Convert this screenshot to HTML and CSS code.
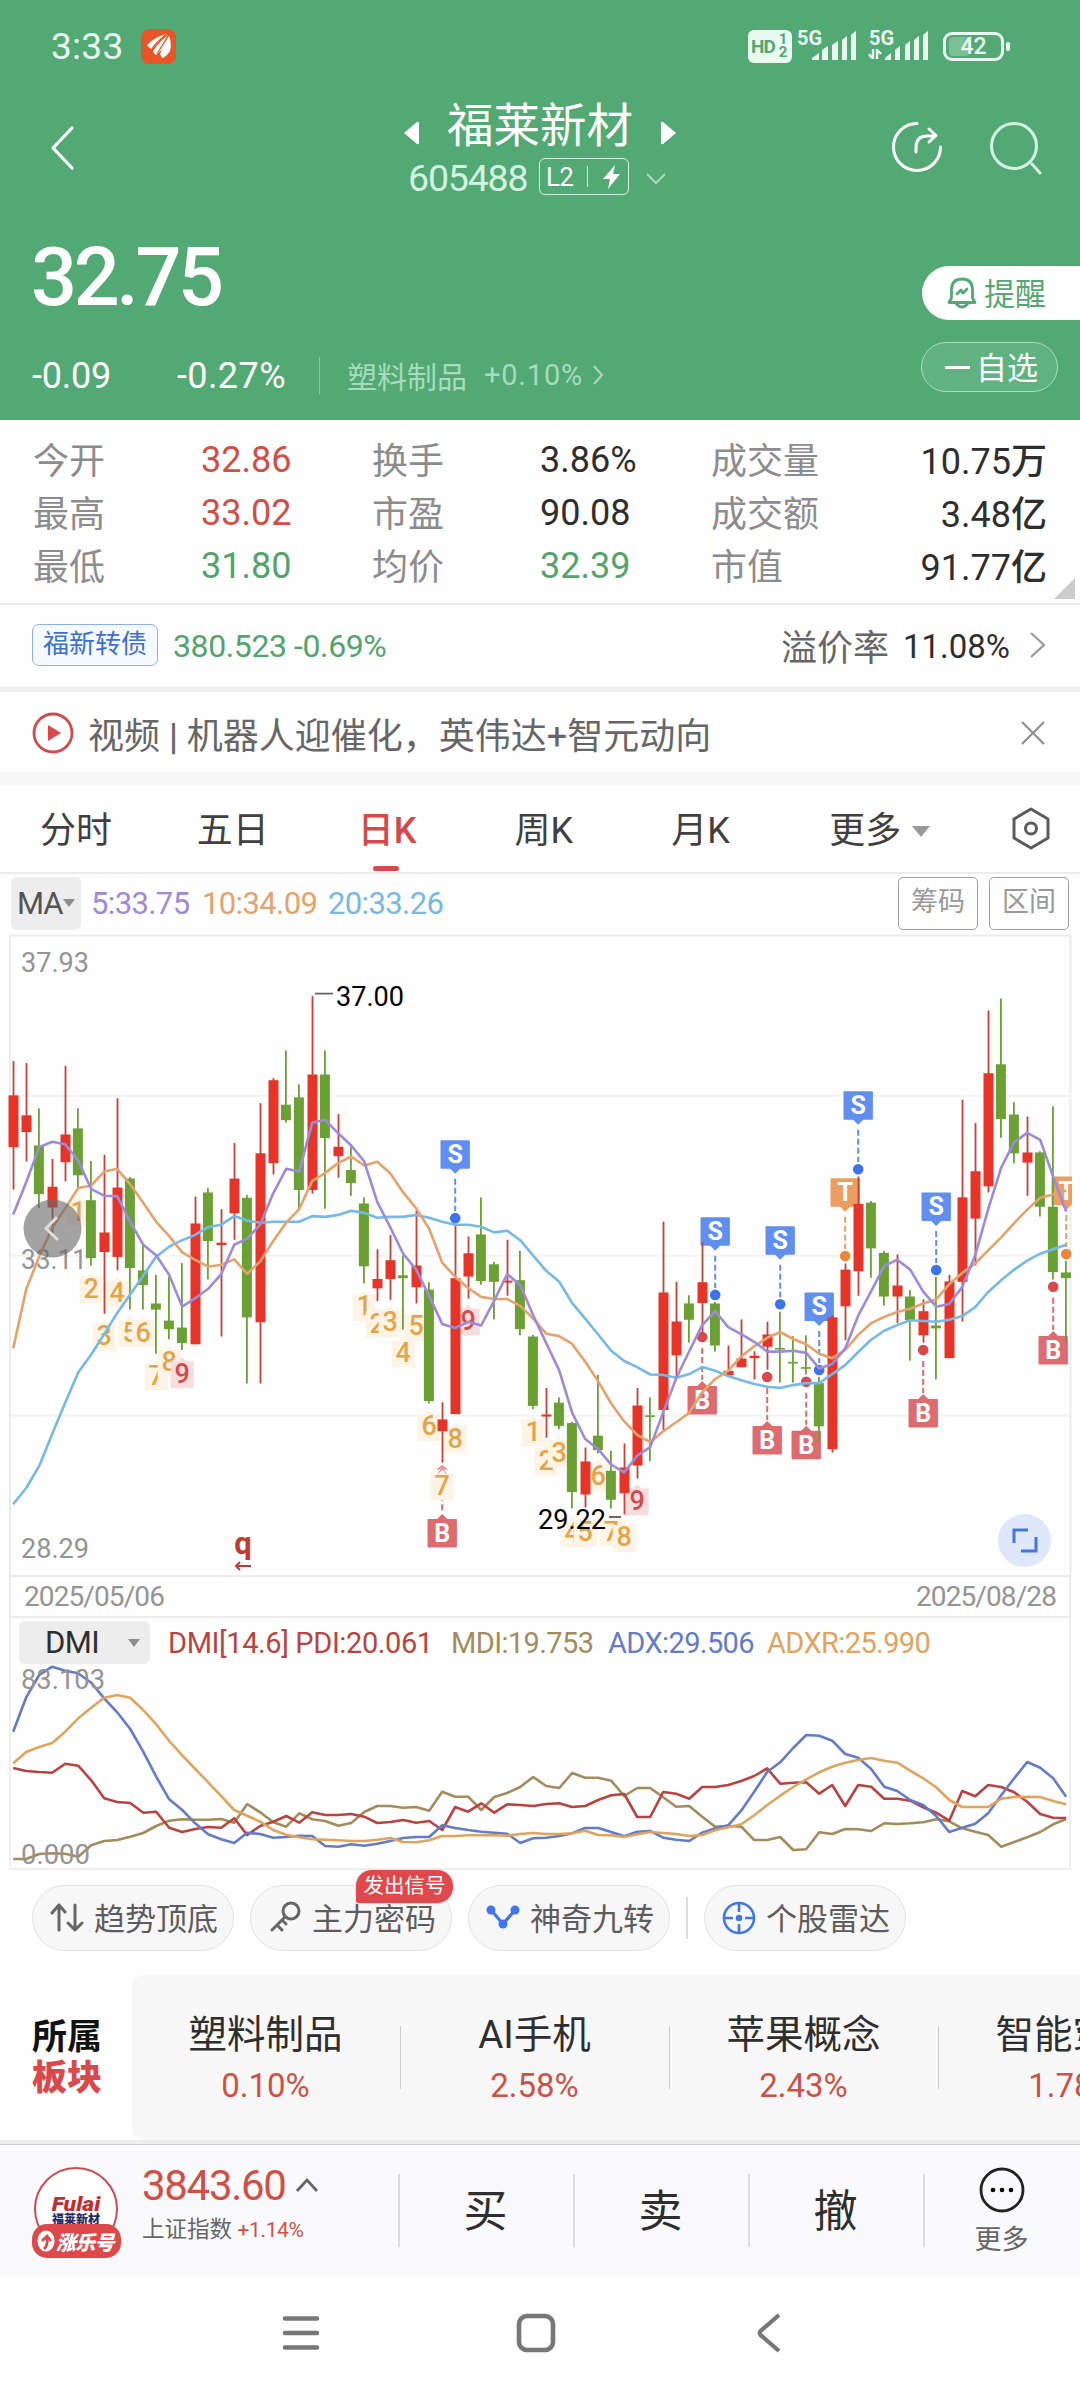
FILE: index.html
```html
<!DOCTYPE html>
<html lang="zh-CN">
<head>
    <meta charset="UTF-8">
    <meta name="viewport" content="width=device-width, initial-scale=1.0">
    <title>福莱新材 605488</title>
    <link rel="stylesheet" href="styles.css">
</head>
<body>
    <header class="header">
        <div class="status-bar">
            <span class="time">3:33</span>
            <svg class="app-logo" width="35" height="35" viewBox="0 0 35 35">
                <rect width="35" height="35" rx="8" fill="#ea5528"/>
                <path d="M6 16Q13 8 26 5Q22 7 19 11Q14 17 11 20Q8 19 6 16Z" fill="#fff"/>
                <path d="M12 22Q19 12 27 6Q24 12 21 20Q18 24 15 26Q13 25 12 22Z" fill="#fff"/>
                <path d="M19 25Q23 14 28 7Q31 15 29 22Q26 27 22 29Q20 28 19 25Z" fill="#fff"/>
                <path d="M11 20Q16 12 25 6M16 25Q22 15 27 7" fill="none" stroke="#ea5528" stroke-width="1.3"/>
            </svg>
            <div class="status-icons">
                <div class="hd-badge">HD<span class="hd-sims"><i>1</i><i>2</i></span></div>
                <svg class="signal" width="60" height="34" viewBox="0 0 60 34">
                    <text x="0" y="16" class="signal-text">5G</text>
                    <path d="M15 31v-2l7-5v7zM25 31v-10l6-4v14zM35 31v-15l6-4v19zM45 31v-20l5-4v24zM54 31v-25l5-4v29z" fill="#e9f9f0"/>
                </svg>
                <svg class="signal" width="62" height="34" viewBox="0 0 62 34">
                    <text x="1" y="16" class="signal-text">5G</text>
                    <path d="M5 20v10M1 25l3 4M9 20v10M9 21l4 4" stroke="#e9f9f0" stroke-width="2.4" fill="none"/>
                    <path d="M17 31v-2l6-5v7zM27 31v-10l5-4v14zM37 31v-15l5-4v19zM46 31v-20l5-4v24zM55 31v-25l5-4v29z" fill="#e9f9f0"/>
                </svg>
                <div class="battery"><span class="battery-level"></span>42</div>
                <span class="battery-tip"></span>
            </div>
        </div>

        <div class="title-bar">
            <svg class="back" width="26" height="46" viewBox="0 0 26 46"><path d="M23 3L4 23L23 43" fill="none" stroke="#fff" stroke-width="3.2" stroke-linecap="round" stroke-linejoin="round"/></svg>
            <div class="title">
                <div class="title-name">
                    <svg width="16" height="24" viewBox="0 0 16 24"><path d="M1 12L14 1Q16 0 16 2V22Q16 24 14 23Z" fill="#fff"/></svg>
                    <h1>福莱新材</h1>
                    <svg width="16" height="24" viewBox="0 0 16 24"><path d="M15 12L2 1Q0 0 0 2V22Q0 24 2 23Z" fill="#fff"/></svg>
                </div>
                <div class="title-code">
                    <span class="code num">605488</span>
                    <span class="level num">L2<i></i><svg width="20" height="26" viewBox="0 0 20 26"><path d="M13 1L1 15H8L6 25L18 10H11Z" fill="#fff"/></svg></span>
                    <svg class="code-arrow" width="22" height="13" viewBox="0 0 22 13"><path d="M2 2L11 11L20 2" fill="none" stroke="#a5dcbb" stroke-width="2"/></svg>
                </div>
            </div>
            <div class="title-actions">
                <svg width="52" height="52" viewBox="0 0 52 52" fill="none" stroke="#fff" stroke-width="3" stroke-linecap="round" stroke-linejoin="round">
                    <path d="M26 2.500A23.500 23.500 0 1 0 49.500 26"/>
                    <path d="M25 31V25Q26 15 36 15H44M38 8L45 14.500L38 21"/>
                </svg>
                <svg width="54" height="54" viewBox="0 0 54 54" fill="none" stroke="#d2f4e1" stroke-width="3" stroke-linecap="round">
                    <circle cx="25" cy="25" r="22.500"/>
                    <path d="M43 43L51 52"/>
                </svg>
            </div>
        </div>

        <div class="price-row">
            <div class="price num">32.75</div>
            <a class="remind" href="#">
                <svg width="30" height="32" viewBox="0 0 30 32" fill="none" stroke="#53a974" stroke-width="2.800" stroke-linejoin="round" stroke-linecap="round">
                    <path d="M4.500 21V12Q5 2 15 2Q25 2 25.500 12V21L28 25.500H2Z"/>
                    <path d="M9.500 27Q15 33 20.500 27M10 17L14 13L16 16L20 12"/>
                </svg>
                <span class="cjk">提醒</span>
            </a>
        </div>

        <div class="change-row">
            <span class="change num">-0.09</span>
            <span class="change-pct num">-0.27%</span>
            <a class="industry" href="#">塑料制品 <span class="num">+0.10%</span>
                <svg width="14" height="22" viewBox="0 0 14 22"><path d="M3 2L11 11L3 20" fill="none" stroke="#a5dcbb" stroke-width="2"/></svg>
            </a>
            <a class="watch" href="#"><i></i><span class="cjk">自选</span></a>
        </div>
    </header>

    <section class="quotes">
        <span class="label">今开</span><span class="value num red">32.86</span>
        <span class="label">换手</span><span class="value num">3.86%</span>
        <span class="label">成交量</span><span class="value num right">10.75万</span>
        <span class="label">最高</span><span class="value num red">33.02</span>
        <span class="label">市盈</span><span class="value num">90.08</span>
        <span class="label">成交额</span><span class="value num right">3.48亿</span>
        <span class="label">最低</span><span class="value num green">31.80</span>
        <span class="label">均价</span><span class="value num green">32.39</span>
        <span class="label">市值</span><span class="value num right">91.77亿</span>
    </section>

    <section class="bond">
        <span class="bond-tag">福新转债</span>
        <span class="bond-value num green">380.523 -0.69%</span>
        <span class="premium">溢价率</span>
        <span class="premium-value num">11.08%</span>
        <svg width="18" height="28" viewBox="0 0 18 28"><path d="M2 2L15 14L2 26" fill="none" stroke="#999" stroke-width="2.200"/></svg>
    </section>

    <section class="news">
        <svg width="42" height="42" viewBox="0 0 42 42"><circle cx="21" cy="21" r="19" fill="none" stroke="#d04c4e" stroke-width="2.800"/><path d="M16 13L29 21L16 29Z" fill="#d9484b"/></svg>
        <span class="news-text">视频 <b>|</b> 机器人迎催化，英伟达+智元动向</span>
        <svg class="close" width="26" height="26" viewBox="0 0 26 26"><path d="M2 2L24 24M24 2L2 24" stroke="#8c8c8c" stroke-width="2"/></svg>
    </section>

    <nav class="tabs">
        <a href="#">分时</a>
        <a href="#">五日</a>
        <a href="#" class="active">日K</a>
        <a href="#">周K</a>
        <a href="#">月K</a>
        <a href="#">更多<i class="caret"></i></a>
        <svg width="40" height="44" viewBox="0 0 40 44" fill="none" stroke="#5c5c5c" stroke-width="3" stroke-linejoin="round">
            <path d="M20 2L37 12V31L20 41L3 31V12Z"/>
            <circle cx="20" cy="21.500" r="5.500"/>
        </svg>
    </nav>

    <div class="ma-bar num">
        <span class="ma-select">MA<i class="caret"></i></span>
        <span class="ma5">5:33.75</span>
        <span class="ma10">10:34.09</span>
        <span class="ma20">20:33.26</span>
        <span class="ma-button first">筹码</span>
        <span class="ma-button">区间</span>
    </div>

    <svg id="kline" class="kline" width="1080" height="645" viewBox="0 0 1080 645"></svg>

    <div class="dates num"><span>2025/05/06</span><span>2025/08/28</span></div>

    <div class="dmi">
        <div class="dmi-bar num">
            <span class="dmi-select">DMI<i class="caret"></i></span>
            <span class="pdi">DMI[14.6] PDI:20.061</span>
            <span class="mdi">MDI:19.753</span>
            <span class="adx">ADX:29.506</span>
            <span class="adxr">ADXR:25.990</span>
        </div>
        <svg id="dmi" width="1060" height="203" viewBox="10 1665 1060 203"></svg>
    </div>

    <section class="tools">
        <a class="tool" href="#">
            <svg width="34" height="34" viewBox="0 0 34 34" fill="none" stroke="#666" stroke-width="3" stroke-linecap="round" stroke-linejoin="round"><path d="M9 29V4M2 12L9 4L15 11M25 4V29M18 22L25 29L32 22"/></svg>
            <span class="cjk">趋势顶底</span>
        </a>
        <a class="tool" href="#">
            <svg width="34" height="34" viewBox="0 0 34 34" fill="none" stroke="#666" stroke-width="3" stroke-linecap="round"><circle cx="23" cy="10" r="8"/><path d="M17 16L4 29M9 24L14 29M14 19L18 23"/></svg>
            <span class="cjk">主力密码</span>
            <span class="tool-tag">发出信号</span>
        </a>
        <a class="tool" href="#">
            <svg width="34" height="34" viewBox="0 0 34 34"><path d="M5 9L17 23L29 9" fill="none" stroke="#4276e8" stroke-width="3.200"/><circle cx="5" cy="9" r="4.500" fill="#4276e8"/><circle cx="29" cy="9" r="4.500" fill="#4276e8"/><circle cx="17" cy="23" r="4.500" fill="#4276e8"/></svg>
            <span class="cjk">神奇九转</span>
        </a>
        <i class="tools-line"></i>
        <a class="tool" href="#">
            <svg width="34" height="34" viewBox="0 0 34 34" fill="none" stroke="#4276e8" stroke-width="2.600"><circle cx="17" cy="17" r="15"/><path d="M17 2V11M17 23V32M2 17H11M23 17H32"/><circle cx="17" cy="17" r="2" fill="#4276e8"/></svg>
            <span class="cjk">个股雷达</span>
        </a>
    </section>

    <section class="sectors">
        <div class="sectors-title">所属<b>板块</b></div>
        <div class="sectors-list">
            <div class="sector">塑料制品<span class="num red">0.10%</span></div>
            <div class="sector">AI手机<span class="num red">2.58%</span></div>
            <div class="sector">苹果概念<span class="num red">2.43%</span></div>
            <div class="sector">智能穿戴<span class="num red">1.78%</span></div>
        </div>
    </section>

    <footer class="trade-bar">
        <div class="company">
            <div class="company-logo"><em>Fulai</em><span>福莱新材</span></div>
            <div class="company-tag">
                <svg width="18" height="22" viewBox="0 0 18 22"><ellipse cx="9" cy="11" rx="8.500" ry="10.500" fill="#fff"/><path d="M7 19Q11 16 10 8M5 11L10 6L14 11" fill="none" stroke="#dd484b" stroke-width="2.800"/></svg>
                涨乐号
            </div>
        </div>
        <div class="index">
            <div class="index-value num red">3843.60<svg width="24" height="16" viewBox="0 0 24 16"><path d="M2 14L12 3L22 14" fill="none" stroke="#666" stroke-width="2.800"/></svg></div>
            <div class="index-name">上证指数 <span class="num red">+1.14%</span></div>
        </div>
        <a class="trade" href="#">买</a>
        <a class="trade" href="#">卖</a>
        <a class="trade" href="#">撤</a>
        <a class="more" href="#">
            <svg width="46" height="46" viewBox="0 0 46 46"><circle cx="23" cy="23" r="21" fill="none" stroke="#222" stroke-width="2.800"/><circle cx="14" cy="23" r="2.300"/><circle cx="23" cy="23" r="2.300"/><circle cx="32" cy="23" r="2.300"/></svg>
            更多
        </a>
    </footer>

    <nav class="system-nav">
        <svg width="38" height="38" viewBox="0 0 38 38" stroke="#777" stroke-width="4.600" stroke-linecap="round"><path d="M3 4.500H35M3 19H35M3 33.500H35"/></svg>
        <svg class="home" width="40" height="40" viewBox="0 0 40 40"><rect x="3" y="3" width="34" height="34" rx="8" fill="none" stroke="#777" stroke-width="4.600"/></svg>
        <svg width="26" height="42" viewBox="0 0 26 42"><path d="M23 3L4.500 19Q3 21 4.500 23L23 39" fill="none" stroke="#777" stroke-width="4.200"/></svg>
    </nav>

    <script src="script.js"></script>
</body>
</html>
```
FILE: styles.css
```css
* {
    box-sizing: border-box;
}
body {
    margin: 0;
    width: 1080px;
    background: #fefefe;
    color: #2e2e2e;
    font-family: Roboto, 'Noto Sans CJK SC', sans-serif;
    overflow-x: hidden;
}
a {
    color: inherit;
    text-decoration: none;
}
i {
    font-style: normal;
}
svg {
    display: block;
    flex-shrink: 0;
}
.num {
    font-family: Roboto, 'Noto Sans CJK SC', sans-serif;
    font-weight: 450;
    letter-spacing: -0.02em;
}
.cjk {
    padding-bottom: 3px;
}
.red {
    color: #cf5046;
}
.green {
    color: #53a36c;
}
.caret {
    display: inline-block;
    border: 9px solid transparent;
    border-top: 11px solid #999;
    border-bottom: 0;
}

/* header */
.header {
    height: 420px;
    background: #53a974;
    color: #fff;
}
.status-bar {
    height: 92px;
    display: flex;
    align-items: center;
    padding: 0 70px 0 51px;
    color: #e9f9f0;
}
.time {
    width: 90px;
    font-size: 37px;
    font-weight: 450;
    letter-spacing: 0.3px;
}
.app-logo {
    margin-top: 1px;
}
.status-icons {
    margin-left: auto;
    display: flex;
    align-items: center;
    color: #e9f9f0;
}
.hd-badge {
    width: 44px;
    height: 33px;
    display: flex;
    align-items: center;
    padding-left: 3px;
    border-radius: 6px;
    background: #e9f9f0;
    color: #53a974;
    font-size: 19px;
    font-weight: 700;
    letter-spacing: -1px;
}
.hd-sims {
    margin-left: 4px;
    font-size: 15px;
    line-height: 13px;
}
.hd-sims i {
    display: block;
}
.signal {
    margin-left: 5px;
    overflow: visible;
}
.signal + .signal {
    margin-left: 11px;
}
.signal-text {
    font-size: 20px;
    font-weight: 700;
    fill: #e9f9f0;
}
.battery {
    position: relative;
    width: 61px;
    height: 29px;
    margin-left: 13px;
    border: 3px solid #e9f9f0;
    border-radius: 9px;
    font-size: 23px;
    font-weight: 500;
    line-height: 24px;
    text-align: center;
    isolation: isolate;
}
.battery-level {
    position: absolute;
    left: 3px;
    top: 2px;
    width: 20px;
    height: 19px;
    border-radius: 4px;
    background: #86c59d;
    z-index: -1;
    opacity: 0.8;
}
.battery-tip {
    width: 4px;
    height: 9px;
    margin-left: 2px;
    border-radius: 2px;
    background: #e9f9f0;
}
.title-bar {
    height: 118px;
    display: grid;
    grid-template-columns: 1fr 320px 1fr;
    align-items: start;
}
.back {
    margin: 33px 0 0 49px;
}
.title-name {
    display: flex;
    align-items: center;
    justify-content: center;
    height: 66px;
}
.title-name svg {
    margin-top: 15px;
}
.title h1 {
    margin: 2px 28px 0;
    font-size: 46.5px;
    font-weight: 400;
    line-height: 62px;
}
.title-code {
    display: flex;
    align-items: center;
    height: 40px;
    padding-left: 28px;
}
.code {
    color: #d2f4e1;
    font-size: 37.500px;
    width: 131px;
    letter-spacing: -1.200px;
}
.level {
    display: flex;
    align-items: center;
    width: 90px;
    height: 37px;
    margin-top: -3px;
    padding-left: 6px;
    border: 1.500px solid #d2f4e1;
    border-radius: 6px;
    font-size: 26px;
    letter-spacing: -0.8px;
}
.level i {
    width: 1px;
    height: 21px;
    margin: 0 14px 0 14px;
    background: #d2f4e1;
}
.code-arrow {
    margin-left: 16px;
}
.title-actions {
    display: flex;
    justify-content: flex-end;
    gap: 46px;
    padding: 29px 37px 0 0;
}
.price-row {
    height: 138px;
    display: flex;
    justify-content: space-between;
    padding-left: 31px;
}
.price {
    padding-top: 20px;
    font-size: 81px;
    line-height: 96px;
    font-weight: 500;
    letter-spacing: -3.400px;
}
.remind {
    width: 158px;
    height: 54px;
    margin-top: 56px;
    padding-left: 25px;
    display: flex;
    align-items: center;
    gap: 7px;
    border-radius: 27px 0 0 27px;
    background: #fff;
    color: #53a974;
    font-size: 31px;
}
.change-row {
    height: 54px;
    display: flex;
    align-items: center;
    padding: 0 22px 0 32px;
}
.change,
.change-pct {
    margin-top: 1px;
    font-size: 36px;
    letter-spacing: -0.2px;
}
.change {
    width: 145px;
}
.change-pct {
    width: 142px;
    letter-spacing: 0.4px;
}
.industry {
    display: flex;
    align-items: center;
    height: 37px;
    padding-left: 27px;
    border-left: 1.500px solid #84c59c;
    color: #a5dcbb;
    font-size: 30px;
}
.industry .num {
    margin-left: 17px;
    font-size: 29px;
    letter-spacing: 0.8px;
}
.industry svg {
    margin-left: 8px;
}
.watch {
    width: 137px;
    height: 50px;
    margin: -16px 0 0 auto;
    padding-left: 23px;
    display: flex;
    align-items: center;
    gap: 6px;
    border: 1px solid #a8dfbd;
    border-radius: 25px;
    background: #61b281;
    font-size: 31px;
}
.watch i {
    width: 25px;
    height: 3px;
    background: #fff;
}

/* quotes */
.quotes {
    position: relative;
    height: 185px;
    padding: 13px 33px 0;
    display: grid;
    grid-template-columns: 168px 171px 168px 171px 120px 216px;
    grid-template-rows: repeat(3, 53px);
    align-items: center;
    border-bottom: 2px solid #ececec;
    font-size: 36px;
}
.quotes::after {
    content: "";
    position: absolute;
    right: 5px;
    bottom: 4px;
    border-left: 21px solid transparent;
    border-bottom: 21px solid #ccc;
}
.label {
    padding-bottom: 3px;
    color: #8c8c8c;
}
.value {
    letter-spacing: 0;
}
.value.right {
    padding-bottom: 3px;
}
.right {
    text-align: right;
}

.bond {
    height: 87px;
    display: flex;
    align-items: center;
    padding: 0 33px 2px 32px;
    border-bottom: 5px solid #eee;
}
.bond-tag {
    width: 126px;
    height: 42px;
    border: 1.500px solid #8fb0e0;
    border-radius: 7px;
    background: #f5faff;
    color: #3c6fd1;
    font-size: 26px;
    line-height: 38px;
    text-align: center;
}
.bond-value {
    margin: 2px 0 0 15px;
    font-size: 32px;
    letter-spacing: -0.4px;
}
.premium {
    margin-left: auto;
    color: #666;
    font-size: 36px;
}
.premium-value {
    margin: 2px 19px 0 14px;
    font-size: 33px;
    letter-spacing: 0;
}
.news {
    height: 93px;
    display: flex;
    align-items: center;
    padding: 2px 34px 0 32px;
    border-bottom: 13px solid #f7f7f7;
}
.news-text {
    margin-left: 14px;
    padding-bottom: 1px;
    color: #666;
    font-size: 36px;
}
.news-text b {
    font-weight: 500;
}
.close {
    margin-left: auto;
}

/* tabs */
.tabs {
    position: relative;
    height: 89px;
    display: flex;
    align-items: center;
    padding: 0 29px 4px 40px;
    border-bottom: 2px solid #ececec;
    color: #404040;
    font-size: 36px;
}
.tabs a {
    width: 157px;
}
.tabs a:nth-child(2) {
    width: 161px;
}
.tabs a:nth-child(3) {
    width: 157px;
}
.tabs a:nth-child(5) {
    width: 158px;
}
.tabs a:nth-child(6) {
    width: 182px;
}
.tabs > svg {
    margin-top: 5px;
}
.tabs .active {
    position: relative;
    color: #d24b4c;
    font-weight: 500;
}
.tabs .active::after {
    content: "";
    position: absolute;
    left: 15px;
    bottom: -18px;
    width: 26px;
    height: 5px;
    border-radius: 3px;
    background: #d9484b;
}
.tabs .caret {
    margin: 0 0 6px 11px;
}
.ma-bar {
    height: 56px;
    display: flex;
    align-items: center;
    padding: 2px 11px 0;
    font-size: 31px;
}
.ma-select {
    width: 70px;
    height: 53px;
    padding-left: 6px;
    display: flex;
    align-items: center;
    border-radius: 6px;
    background: #ededed;
    color: #555;
    letter-spacing: -1px;
}
.ma-select .caret,
.dmi-select .caret {
    border-width: 8px 6.500px 0;
    border-top-color: #8c8c8c;
}
.ma5 {
    width: 111px;
    margin-left: 10px;
    color: #9d8bd8;
}
.ma10 {
    width: 126px;
    color: #e3a36d;
}
.ma20 {
    color: #76b9e5;
}
.ma-button {
    width: 80px;
    height: 53px;
    margin-left: 11px;
    border: 1.500px solid #a0a0a0;
    border-radius: 5px;
    color: #999;
    font-size: 27px;
    font-weight: 400;
    line-height: 49px;
    letter-spacing: 0;
    text-align: center;
}
.ma-button.first {
    margin-left: auto;
}

/* charts */
.kline {
    font-family: Roboto, sans-serif;
}
.dates {
    height: 43px;
    margin: 0 9px;
    padding: 0 13px;
    display: flex;
    justify-content: space-between;
    align-items: center;
    border: 2px solid #ececec;
    color: #949494;
    font-size: 28px;
    letter-spacing: -0.9px;
}
.dmi {
    height: 252px;
    margin: 0 9px;
    border: 2px solid #efefef;
    border-top: 0;
}
.dmi > svg {
    margin-left: -1px;
    overflow: visible;
}
.dmi-bar {
    height: 47px;
    display: flex;
    align-items: center;
    padding: 2px 0 0 8px;
    font-size: 29px;
    letter-spacing: -0.6px;
}
.dmi-select {
    width: 131px;
    height: 43px;
    margin-right: 18px;
    padding: 0 10px 0 26px;
    display: flex;
    align-items: center;
    justify-content: space-between;
    border-radius: 6px;
    background: #ededed;
    font-size: 31px;
}
.pdi {
    width: 283px;
    color: #b94340;
    letter-spacing: -0.4px;
    white-space: nowrap;
}
.mdi {
    width: 157px;
    color: #a38c5c;
}
.adx {
    width: 159px;
    color: #647bc6;
}
.adxr {
    color: #dfa45e;
}

/* tools */
.tools {
    height: 105px;
    padding: 15px 32px 0;
    display: flex;
    align-items: flex-start;
    gap: 16px;
}
.tool {
    position: relative;
    width: 202px;
    height: 66px;
    display: flex;
    align-items: center;
    gap: 10px;
    padding-left: 17px;
    border: 1.500px solid #e3e3e3;
    border-radius: 33px;
    background: #f7f7f7;
    color: #5c5c5c;
    font-size: 31px;
    white-space: nowrap;
}
.tool-tag {
    position: absolute;
    left: 104px;
    top: -17px;
    width: 99px;
    height: 35px;
    border: 1px solid #f8dcdc;
    border-radius: 17px 17px 17px 3px;
    background: #e0494c;
    color: #fff;
    font-size: 20.500px;
    line-height: 32px;
    text-align: center;
}
.tools-line {
    width: 2px;
    height: 42px;
    margin-top: 12px;
    background: #ddd;
}
.sectors {
    height: 165px;
    display: flex;
    overflow: hidden;
}
.sectors-title {
    width: 132px;
    padding: 42px 0 0 32px;
    color: #111;
    font-size: 35px;
    font-weight: 700;
    line-height: 41px;
}
.sectors-title b {
    display: block;
    color: #d9484b;
}
.sectors-list {
    width: 948px;
    display: flex;
    border-radius: 12px 0 0 12px;
    background: #f7f7f7;
    overflow: hidden;
}
.sector {
    position: relative;
    flex: 0 0 269px;
    padding: 32px 2px 0 0;
    font-size: 38.500px;
    line-height: 56px;
    text-align: center;
    white-space: nowrap;
}
.sector span {
    display: block;
    margin-top: -1px;
    font-size: 33px;
    line-height: 48px;
    letter-spacing: 0;
}
.sector::after {
    content: "";
    position: absolute;
    right: 0;
    top: 51px;
    width: 1px;
    height: 63px;
    background: #ccc;
}

/* bottom bars */
.trade-bar {
    height: 136px;
    display: flex;
    border-top: 4px solid #ededed;
    background: #fafafc;
    box-shadow: inset 0 1px #cfcfcf;
}
.company {
    width: 142px;
    padding: 23px 0 0 32px;
}
.company-logo {
    width: 84px;
    height: 84px;
    margin-left: 2px;
    padding-top: 26px;
    border: 2px solid #cb4c50;
    border-radius: 50%;
    background: #fff;
    text-align: center;
}
.company-logo em {
    display: block;
    color: #bd2f33;
    font-size: 20px;
    font-weight: 900;
    line-height: 18px;
    transform: scaleX(1.15);
}
.company-logo span {
    display: block;
    color: #252b68;
    font-size: 12px;
    font-weight: 900;
    line-height: 14px;
}
.company-tag {
    position: relative;
    width: 89px;
    height: 34px;
    margin-top: -27px;
    display: flex;
    align-items: center;
    gap: 1px;
    padding-left: 5px;
    border-radius: 15px;
    background: #dd484b;
    color: #fff;
    font-size: 20px;
    font-weight: 900;
    font-style: italic;
    white-space: nowrap;
    letter-spacing: -0.8px;
}
.index {
    width: 256px;
    padding-top: 14px;
}
.index-value {
    display: flex;
    align-items: center;
    gap: 9px;
    height: 54px;
    font-size: 42px;
    letter-spacing: -1.300px;
}
.index-name {
    color: #666;
    font-size: 22.500px;
    line-height: 34px;
}
.index-name .num {
    font-size: 21px;
    letter-spacing: -0.4px;
}
.trade,
.more {
    position: relative;
    width: 175px;
    padding-top: 36px;
    font-size: 44px;
    line-height: 64px;
    text-align: center;
}
.trade::before,
.more::before {
    content: "";
    position: absolute;
    left: 0;
    top: 30px;
    width: 2px;
    height: 73px;
    background: #ddd;
}
.more {
    width: 157px;
    padding-top: 23px;
    color: #666;
    font-size: 27px;
    line-height: 54px;
}
.more svg {
    margin: 0 auto;
}
.system-nav {
    height: 124px;
    padding: 0 298px 10px 282px;
    display: flex;
    align-items: center;
    justify-content: space-between;
}
.home {
    margin-right: 4px;
}
```
FILE: script.js
```js
const GREEN = '#6ba134';
const RED = '#e63528';
const STEP = 13;

// high, body top, body bottom, low, color
const candles = [
    [321,405,532,636,'r'], [326,454,495,567,'r'], [437,528,647,681,'g'], [561,629,680,742,'r'],
    [333,501,569,616,'r'], [437,486,601,630,'g'], [566,662,804,822,'g'], [551,741,789,940,'r'],
    [412,631,801,834,'r'], [605,609,828,930,'g'], [770,834,870,930,'g'], [845,915,930,1038,'g'],
    [850,957,978,1003,'g'], [816,974,1012,1029,'g'], [653,719,1015,1015,'r'], [632,643,762,856,'g'],
    [684,766,772,996,'r'], [522,609,694,759,'r'], [649,656,949,1111,'g'], [424,547,961,1111,'r'],
    [363,368,571,599,'r'], [295,428,466,472,'g'], [378,410,637,687,'g'], [162,354,637,646,'r'],
    [295,354,510,683,'g'], [451,531,554,607,'r'], [530,588,620,651,'g'], [655,670,824,866,'g'],
    [782,855,878,909,'r'], [747,809,855,906,'r'], [797,846,853,979,'g'], [687,822,875,915,'r'],
    [863,881,1154,1160,'g'], [1157,1199,1228,1305,'r'], [725,853,1186,1186,'r'], [751,792,849,903,'r'],
    [655,746,860,869,'g'], [813,819,862,954,'g'], [759,859,864,896,'r'], [786,858,978,993,'g'],
    [992,996,1166,1174,'g'], [1122,1187,1192,1244,'r'], [1145,1158,1215,1223,'g'], [1205,1208,1377,1417,'g'],
    [1268,1302,1383,1415,'r'], [1090,1239,1274,1282,'g'], [1276,1325,1396,1417,'g'], [1258,1317,1380,1432,'r'],
    [1122,1165,1312,1344,'r'], [1145,1189,1193,1301,'g'], [715,888,1176,1225,'r'], [862,959,1042,1095,'r'],
    [895,915,955,1011,'g'], [765,863,914,985,'r'], [911,915,1018,1033,'g'], [1018,1080,1091,1091,'r'],
    [954,1050,1071,1071,'r'], [1032,1043,1049,1101,'r'], [960,991,1021,1077,'r'], [935,1024,1028,1109,'g'],
    [995,1058,1062,1109,'g'], [993,1071,1075,1089,'g'], [1095,1110,1216,1255,'g'], [944,949,1272,1280,'r'],
    [817,832,922,1005,'r'], [604,671,836,896,'r'], [664,668,780,852,'g'], [786,791,898,920,'g'],
    [795,871,898,963,'r'], [882,898,956,1055,'g'], [905,934,993,1011,'r'], [850,969,976,1101,'g'],
    [845,861,1049,1049,'r'], [416,655,862,959,'r'], [473,591,707,822,'r'], [197,351,628,643,'r'],
    [168,329,463,509,'g'], [422,452,547,572,'g'], [457,545,570,651,'r'], [542,545,678,702,'g'],
    [432,678,838,856,'g'], [811,839,853,1010,'g']
];

const ma5 = [697,618,532,519,525,565,635,651,652,715,771,797,845,923,902,879,843,771,756,722,645,585,592,472,465,498,528,567,666,728,793,832,897,965,975,960,969,908,843,870,944,1012,1079,1183,1247,1272,1310,1329,1288,1267,1182,1098,1032,968,934,973,990,1009,1033,1033,1031,1036,1074,1063,1025,945,885,823,808,832,886,923,916,875,797,684,582,520,497,514,605,690];
const ma10 = [1025,880,800,730,682,632,626,592,585,623,668,715,750,790,808,825,820,807,842,812,762,717,684,615,595,571,555,577,568,596,643,682,732,815,850,877,899,904,904,921,952,989,995,1014,1058,1106,1160,1204,1237,1255,1228,1206,1183,1133,1100,1080,1045,1020,999,985,1002,1015,1038,1049,1029,992,963,948,936,928,915,905,868,840,817,785,753,718,685,656,648,638];
const ma20 = [1407,1367,1313,1235,1158,1084,1040,990,938,893,847,800,776,760,747,728,722,701,712,717,715,715,715,701,703,698,688,693,705,703,703,698,705,715,722,722,727,741,737,760,798,835,862,914,952,991,1031,1056,1071,1089,1090,1097,1088,1071,1080,1093,1103,1112,1119,1122,1115,1110,1110,1088,1066,1034,1004,982,968,956,958,960,955,946,924,887,858,832,810,793,782,771];

// index, center, count
const turns = [
    [5,689,1], [6,878,2], [7,994,3], [8,888,4], [9,985,5], [10,985,6], [11,1091,7], [12,1058,8], [13,1086,9],
    [27,921,1], [28,963,2], [29,960,3], [30,1035,4], [31,970,5], [32,1215,6], [33,1361,7], [34,1245,8], [35,957,9],
    [40,1228,1], [41,1299,2], [42,1279,3], [43,1475,4], [44,1473,5], [45,1337,6], [46,1473,7], [47,1487,8], [48,1397,9]
];

// index, box top, dot, letter
const signals = [
    [34,515,706,'S'], [54,704,894,'S'], [59,726,917,'S'], [62,888,1078,'S'], [65,395,586,'S'], [71,643,833,'S'],
    [64,608,799,'T'], [81,604,794,'T'],
    [33,1443,1322,'B'], [53,1117,997,'B'], [58,1215,1095,'B'], [61,1227,1107,'B'], [70,1149,1029,'B'], [80,995,874,'B']
];
const signalColors = {
    S: ['#608fef', '#3c74e8'],
    T: ['#eb9d62', '#e8863c'],
    B: ['#de6b70', '#d9484b']
};

const x = i => 13.2 + STEP * i;
const y = v => v / 2.45;
const line = (data, color, fy, width) =>
    `<polyline points="${data.map((v, i) => x(i).toFixed(1) + ',' + fy(v).toFixed(1)).join(' ')}" fill="none" stroke="${color}" stroke-width="${width}" stroke-linejoin="round"/>`;

function drawTurn([i, v, n]) {
    const cx = x(i), cy = y(v);
    const last = n === 9;
    return `<path d="M${cx - 11.5} ${cy - 12}H${cx - 4}L${cx} ${cy - 16}L${cx + 4} ${cy - 12}H${cx + 11.5}V${cy + 15}H${cx - 11.5}Z" fill="${last ? '#f9dcde' : '#fdf4e6'}"/>
        <text x="${cx}" y="${cy + 9.5}" font-size="27" font-weight="500" text-anchor="middle" fill="${last ? '#cf4b50' : '#e3a54c'}">${n}</text>`;
}

function drawSignal([i, top, dot, letter]) {
    const cx = x(i), t = y(top), b = t + 28.5, d = y(dot);
    const [fill, dotFill] = signalColors[letter];
    const up = letter === 'B';
    const tip = up
        ? `M${cx - 6} ${t + 1}L${cx} ${t - 5}L${cx + 6} ${t + 1}Z`
        : `M${cx - 6} ${b - 1}L${cx} ${b + 5}L${cx + 6} ${b - 1}Z`;
    // the signal at 33 shares its place with a count badge, so its line starts below that
    const dash = up ? [i === 33 ? y(1385) : d + 11, t - 6] : [b + 10, d - 7];
    const mark = i === 33
        ? `<path d="M${cx - 5} ${d + 5}L${cx} ${d - 1}L${cx + 5} ${d + 5}ZM${cx - 5} ${d}L${cx} ${d - 4}L${cx + 5} ${d}" fill="#efaaae" stroke="#d9686c"/>`
        : `<circle cx="${cx}" cy="${d}" r="5.3" fill="${dotFill}"/>`;
    return `<line x1="${cx}" x2="${cx}" y1="${dash[0]}" y2="${dash[1]}" stroke="${fill}" stroke-width="2" stroke-dasharray="6 3"/>
        ${mark}
        <rect x="${cx - 14.7}" y="${t}" width="29.4" height="28.5" rx="1" fill="${fill}"/><path d="${tip}" fill="${fill}"/>
        <text x="${cx}" y="${t + 23}" font-size="25" font-weight="700" text-anchor="middle" fill="#fff">${letter}</text>`;
}

function drawCandle([high, top, bottom, low, c], i) {
    const cx = x(i) + (c === 'r' ? 0.3 : -0.3), color = c === 'r' ? RED : GREEN;
    return `<rect x="${cx - 0.9}" y="${y(high)}" width="1.8" height="${y(low - high)}" fill="${c === 'r' ? '#c44239' : color}"/>
        <rect x="${cx - 5}" y="${y(top)}" width="10" height="${Math.max(y(bottom - top), 1.5)}" fill="${color}"/>`;
}

const label = (tx, ty, text, width, color) =>
    `<text x="${tx}" y="${ty}" font-size="28" font-weight="450" textLength="${width}" lengthAdjust="spacingAndGlyphs" fill="${color}">${text}</text>`;

document.getElementById('kline').innerHTML = `
    <clipPath id="plot"><rect x="8" y="4" width="1064" height="640"/></clipPath>
    <path d="M9 166H1071M9 325.700H1071M9 485.700H1071" stroke="#f3f3f3" stroke-width="2"/>
    <path d="M10 645V5.500H1070.500V645" fill="none" stroke="#ececec" stroke-width="2"/>
    ${label(21, 42, '37.93', 68, '#949494')}
    ${label(21, 339, '33.11', 66, '#949494')}
    ${label(21, 628, '28.29', 68, '#949494')}
    <g clip-path="url(#plot)">
        ${signals.map(drawSignal).join('')}
        ${turns.map(drawTurn).join('')}
        ${candles.map(drawCandle).join('')}
        ${line(ma20, '#76b9e5', y, 2.6)}
        ${line(ma10, '#e3a36d', y, 2.6)}
        ${line(ma5, '#9d8bd8', y, 2.6)}
    </g>
    <path d="M315 63.700H333M609 587H621" stroke="#666" stroke-width="1.800"/>
    ${label(336, 75.5, '37.00', 68, '#000')}
    ${label(538, 599, '29.22', 68, '#000')}
    <circle cx="52.500" cy="298.500" r="29" fill="#666" fill-opacity="0.6"/>
    <path d="M57 287L46 298.500L58 310" fill="none" stroke="#ddd" stroke-width="3"/>
    <text x="243" y="624" font-size="31" font-weight="700" text-anchor="middle" fill="#c2392f">q</text>
    <path d="M236 636H251M240 632L236 636L240 640" fill="none" stroke="#c2392f" stroke-width="2"/>
    <circle cx="1024.500" cy="610.500" r="26.500" fill="#dfe7fb"/>
    <path d="M1014 613V600H1028M1021 621H1036V607" fill="none" stroke="#4276e8" stroke-width="3"/>`;

const pdi = [624,633,636,638,611,617,661,715,726,729,758,755,803,816,807,801,803,775,825,798,785,768,788,757,765,765,762,770,789,786,780,788,783,810,741,755,730,758,733,735,738,732,730,741,738,720,706,702,771,771,696,701,716,681,681,675,663,648,625,671,668,667,701,675,738,675,680,716,716,722,742,758,782,693,709,675,681,697,725,762,773,774];
const mdi = [897,897,882,880,881,890,856,843,840,830,819,798,782,778,779,779,777,788,732,757,787,800,760,778,783,797,789,756,738,738,743,741,752,695,710,710,750,711,699,681,651,678,684,639,653,653,662,708,684,684,712,740,738,770,800,798,800,840,840,831,870,868,817,822,807,808,813,790,792,790,787,778,784,805,815,825,860,846,832,816,793,777];
const adx = [515,412,345,320,332,340,368,415,457,507,575,650,718,750,790,823,838,849,818,822,833,831,827,828,858,860,853,857,851,843,834,831,831,796,804,810,815,818,821,849,835,833,828,820,804,804,816,829,815,813,833,839,843,818,805,796,752,695,636,607,564,525,527,542,582,593,627,680,693,720,735,768,816,803,791,760,706,655,606,623,655,710];
const adxr = [610,576,561,549,515,475,443,413,405,413,450,493,543,586,627,667,708,750,767,785,810,824,832,838,839,841,843,843,839,834,846,847,841,828,828,826,826,826,827,822,819,822,822,820,812,825,826,831,823,816,819,822,828,825,811,802,793,766,735,707,681,658,637,620,608,600,594,602,608,632,655,682,720,741,741,741,716,711,710,711,723,733];
const dmiY = v => 1560 + v / 3;

document.getElementById('dmi').innerHTML =
    line(mdi, '#a38c5c', dmiY, 2.6) + line(pdi, '#b94340', dmiY, 2.6) +
    line(adx, '#647bc6', dmiY, 2.6) + line(adxr, '#dfa45e', dmiY, 2.6) +
    label(21, 1689, '83.103', 84, '#949494') + label(21, 1864, '0.000', 69, '#949494');
```
